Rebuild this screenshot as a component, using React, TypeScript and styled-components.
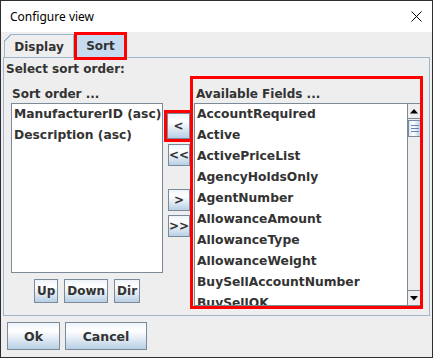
import { ReactElement } from 'react'
import styled, { createGlobalStyle } from 'styled-components'

const GlobalStyle = createGlobalStyle`
  html, body {
    margin: 0;
    padding: 0;
    background: #ffffff;
  }
  * {
    box-sizing: border-box;
  }
`

const BORDER = '#7a8a99'
const PANEL_BORDER = '#9fb5cc'
const TEXT = '#333333'
const MARK = '#ff0000'

const Window = styled.div`
  width: 433px;
  height: 358px;
  border: 1px solid #2e2e2e;
  background: #eeeeee;
  display: flex;
  flex-direction: column;
  font-family: 'DejaVu Sans', sans-serif;
  font-weight: bold;
  font-size: 12px;
  color: ${TEXT};
`

const TitleBar = styled.div`
  height: 31px;
  flex: none;
  background: #ffffff;
  display: flex;
  align-items: center;
  justify-content: space-between;
  padding: 0 10px 0 9px;
  font-family: 'Noto Sans', sans-serif;
  font-weight: normal;
  font-size: 12px;
  color: #000000;
`

const Body = styled.div`
  padding: 0 2px;
  display: flex;
  flex-direction: column;
`

const TabStrip = styled.div`
  height: 25px;
  display: flex;
  align-items: flex-end;
  padding-left: 1px;
`

const Tab = styled.div<{ $active?: boolean; $width: number }>`
  position: relative;
  width: ${({ $width }) => $width}px;
  height: ${({ $active }) => ($active ? 28 : 23)}px;
  margin-bottom: ${({ $active }) => ($active ? -3 : 0)}px;
  z-index: ${({ $active }) => ($active ? 1 : 0)};
  display: flex;
  align-items: center;
  justify-content: center;
  background: ${({ $active }) => ($active ? '#c6daf0' : '#eeeeee')};
  border: ${({ $active }) =>
    $active ? `3px solid ${MARK}` : `1px solid ${PANEL_BORDER}`};
  border-bottom: ${({ $active }) => ($active ? `3px solid ${MARK}` : 'none')};
  padding-top: ${({ $active }) => ($active ? 0 : 1)}px;
  &::before {
    content: '';
    position: absolute;
    top: -1px;
    left: -1px;
    width: 7px;
    height: 7px;
    background: linear-gradient(
      135deg,
      #eeeeee 0 48%,
      ${PANEL_BORDER} 48% 60%,
      transparent 60%
    );
    display: ${({ $active }) => ($active ? 'none' : 'block')};
  }
`

const Panel = styled.div`
  height: 259px;
  border: 1px solid ${PANEL_BORDER};
  padding: 4px 1px 0;
  display: flex;
  flex-direction: column;
`

const Heading = styled.div`
  line-height: 15px;
  padding-left: 1px;
`

const Columns = styled.div`
  display: flex;
  align-items: flex-start;
  margin-top: -1px;
`

const LeftColumn = styled.div`
  width: 152px;
  margin-left: 6px;
  display: flex;
  flex-direction: column;
`

const Label = styled.div<{ $top: number; $left: number }>`
  line-height: 16px;
  padding-top: ${({ $top }) => $top}px;
  padding-left: ${({ $left }) => $left}px;
  white-space: nowrap;
`

const List = styled.div<{ $height?: number }>`
  margin-top: 1px;
  height: ${({ $height }) => ($height ? `${$height}px` : 'auto')};
  border: 1px solid ${BORDER};
  background: #ffffff;
  display: flex;
  overflow: hidden;
`

const RightList = styled(List)`
  flex: 1;
  margin-left: 1px;
  border-right: none;
`

const Items = styled.div`
  flex: 1;
  overflow: hidden;
`

const Item = styled.div`
  height: 21px;
  line-height: 21px;
  padding-left: 2px;
  white-space: nowrap;
  font-size: 12.3px;
`

const ButtonRow = styled.div`
  margin-top: 6px;
  display: flex;
  justify-content: center;
  gap: 6px;
`

const Button = styled.button<{ $width?: number; $height: number; $size?: number }>`
  width: ${({ $width }) => ($width ? `${$width}px` : 'auto')};
  height: ${({ $height }) => $height}px;
  padding: 0 2px;
  border: 1px solid ${BORDER};
  border-radius: 0;
  background: linear-gradient(
    #eef4fa 0%,
    #ffffff 30%,
    #dde8f3 65%,
    #b8cfe5 100%
  );
  font-family: 'DejaVu Sans', sans-serif;
  font-weight: bold;
  font-size: ${({ $size }) => $size ?? 12}px;
  color: ${TEXT};
  display: flex;
  align-items: center;
  justify-content: center;
  flex: none;
`

const MiddleColumn = styled.div`
  width: 27px;
  padding-top: 34px;
  display: flex;
  flex-direction: column;
  align-items: flex-end;
`

const MarkedBox = styled.div`
  border: 3px solid ${MARK};
  border-right: none;
`

const RightBox = styled.div`
  width: 233px;
  height: 233px;
  border: 3px solid ${MARK};
  display: flex;
  flex-direction: column;
`

const Scrollbar = styled.div`
  width: 13px;
  border-left: 1px solid ${BORDER};
  background: #eeeeee;
  display: flex;
  flex-direction: column;
`

const ScrollArrow = styled.div<{ $down?: boolean }>`
  height: 15px;
  display: flex;
  align-items: center;
  justify-content: center;
  background: #eeeeee;
  border-top: ${({ $down }) => ($down ? `1px solid ${BORDER}` : 'none')};
  border-bottom: ${({ $down }) => ($down ? 'none' : `1px solid ${BORDER}`)};
`

const Track = styled.div`
  flex: 1;
  padding-top: 1px;
`

const Thumb = styled.div`
  height: 17px;
  border: 1px solid ${BORDER};
  border-right: none;
  background: linear-gradient(90deg, #dde8f3, #ffffff 40%, #b8cfe5);
  display: flex;
  flex-direction: column;
  justify-content: center;
  align-items: center;
  gap: 2px;
`

const Grip = styled.div`
  width: 8px;
  height: 1px;
  background: #6382bf;
`

const Footer = styled.div`
  display: flex;
  gap: 5px;
  padding: 6px 0 0 6px;
`

const CloseIcon = (): ReactElement => (
  <svg width="11" height="11" viewBox="0 0 11 11">
    <path d="M0.5 0.5 L10.5 10.5 M10.5 0.5 L0.5 10.5" stroke="#000" strokeWidth="1" />
  </svg>
)

const Arrow = ({ down }: { down?: boolean }): ReactElement => (
  <svg width="8" height="5" viewBox="0 0 8 5">
    <path d={down ? 'M0 0 H8 L4 4.5 Z' : 'M0 4.5 H8 L4 0 Z'} fill="#000" />
  </svg>
)

const sortOrder = ['ManufacturerID (asc)', 'Description (asc)']

const fields = [
  'AccountRequired',
  'Active',
  'ActivePriceList',
  'AgencyHoldsOnly',
  'AgentNumber',
  'AllowanceAmount',
  'AllowanceType',
  'AllowanceWeight',
  'BuySellAccountNumber',
  'BuySellOK',
]

const App = (): ReactElement => {
  return (
    <>
      <GlobalStyle />
      <Window>
        <TitleBar>
          <span>Configure view</span>
          <CloseIcon />
        </TitleBar>
        <Body>
          <TabStrip>
            <Tab $width={70}>Display</Tab>
            <Tab $width={53} $active>
              Sort
            </Tab>
          </TabStrip>
          <Panel>
            <Heading>Select sort order:</Heading>
            <Columns>
              <LeftColumn>
                <Label $top={10} $left={1}>
                  Sort order ...
                </Label>
                <List $height={170}>
                  <Items>
                    {sortOrder.map((s) => (
                      <Item key={s}>{s}</Item>
                    ))}
                  </Items>
                </List>
                <ButtonRow>
                  <Button $height={24}>Up</Button>
                  <Button $height={24}>Down</Button>
                  <Button $height={24}>Dir</Button>
                </ButtonRow>
              </LeftColumn>
              <MiddleColumn>
                <MarkedBox>
                  <Button $width={23} $height={26}>
                    &lt;
                  </Button>
                </MarkedBox>
                <Button $width={22} $height={22} style={{ marginTop: 2 }}>
                  &lt;&lt;
                </Button>
                <Button $width={22} $height={22} style={{ marginTop: 23 }}>
                  &gt;
                </Button>
                <Button $width={22} $height={22} style={{ marginTop: 4 }}>
                  &gt;&gt;
                </Button>
              </MiddleColumn>
              <RightBox>
                <Label $top={7} $left={3}>
                  Available Fields ...
                </Label>
                <RightList>
                  <Items>
                    {fields.map((f) => (
                      <Item key={f}>{f}</Item>
                    ))}
                  </Items>
                  <Scrollbar>
                    <ScrollArrow>
                      <Arrow />
                    </ScrollArrow>
                    <Track>
                      <Thumb>
                        <Grip />
                        <Grip />
                        <Grip />
                      </Thumb>
                    </Track>
                    <ScrollArrow $down>
                      <Arrow down />
                    </ScrollArrow>
                  </Scrollbar>
                </RightList>
              </RightBox>
            </Columns>
          </Panel>
        </Body>
        <Footer>
          <Button $width={53} $height={28} $size={12.5}>
            Ok
          </Button>
          <Button $width={82} $height={28} $size={12.5}>
            Cancel
          </Button>
        </Footer>
      </Window>
    </>
  )
}

export default App
